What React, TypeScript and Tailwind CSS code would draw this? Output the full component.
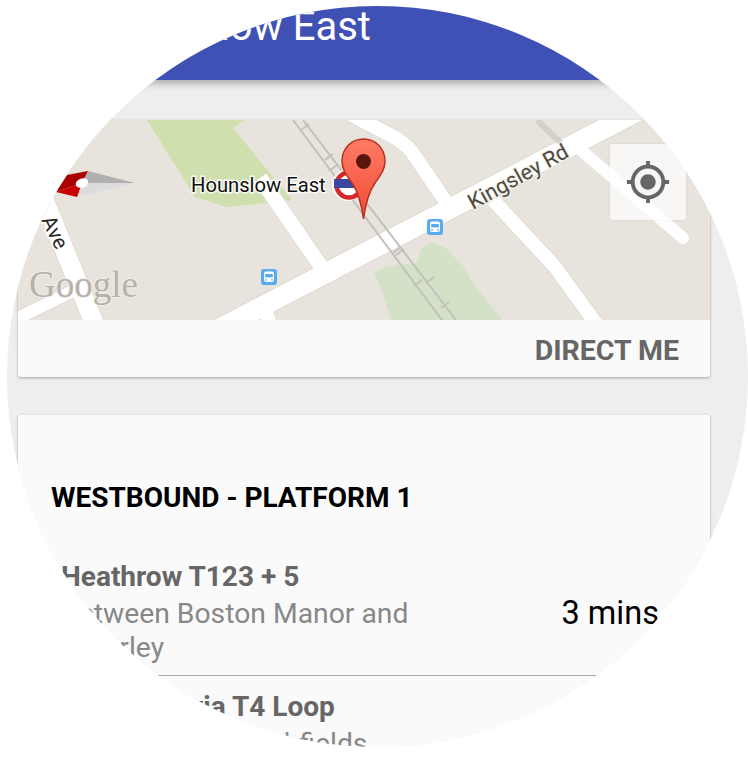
import { MdMyLocation } from "react-icons/md"

const font = "font-['Roboto',sans-serif]"

function BusIcon({ x, y }: { x: number; y: number }) {
    return (
        <g transform={`translate(${x} ${y})`}>
            <rect x="0" y="0" width="16" height="16" rx="3" fill="#5aaaf0" />
            <rect x="3" y="2.5" width="10" height="10.5" rx="2" fill="#ffffff" />
            <rect x="4.2" y="5" width="7.6" height="3.4" fill="#5aaaf0" />
            <circle cx="5" cy="10.8" r="0.9" fill="#5aaaf0" />
            <circle cx="11" cy="10.8" r="0.9" fill="#5aaaf0" />
        </g>
    )
}

function StreetMap() {
    const roads = [
        { d: "M10 322 L75 290", w: 12 },
        { d: "M30 165 L97 330", w: 19 },
        { d: "M260 178 L322 268", w: 15 },
        { d: "M262 300 L272 330", w: 14 },
        { d: "M348 113 L390 135 Q404 142 412 152 L448 205", w: 14 },
        { d: "M493 200 L555 267 L597 325", w: 14 },
        { d: "M200 339 L282 296 L640 110", w: 20 },
    ]
    const ties = [
        [305, 127], [329, 157], [333, 168], [397, 250], [400, 252], [418, 283], [430, 280], [445, 305],
    ]

    return (
        <svg viewBox="18 120 692 200" className="block w-full h-[200px]">
            <defs>
                <linearGradient id="pinFill" x1="0" y1="0" x2="0" y2="1">
                    <stop offset="0" stopColor="#ff7c66" />
                    <stop offset="1" stopColor="#f04a34" />
                </linearGradient>
            </defs>
            <rect x="18" y="120" width="692" height="200" fill="#e8e4dd" />

            {/* parks */}
            <polygon points="147,120 245,120 233,128 292,200 227,207 195,197" fill="#cfdfad" />
            <path d="M374 273 L384 267 L417 263 L421 248 L432 243 L446 248 L464 267 L471 280 L502 320 L391 320 L382 290 Z" fill="#d3e2c6" />

            {/* roads */}
            {roads.map((r) => (
                <path key={r.d} d={r.d} fill="none" stroke="#dcd8cd" strokeWidth={r.w + 1.5} strokeLinejoin="round" />
            ))}
            {roads.map((r) => (
                <path key={r.d + "w"} d={r.d} fill="none" stroke="#ffffff" strokeWidth={r.w} strokeLinejoin="round" />
            ))}
            <path d="M575 145 L683 238" fill="none" stroke="#ffffff" strokeWidth="12" strokeLinecap="round" />
            <path d="M537 120 L561 143" fill="none" stroke="#d2d2c6" strokeWidth="6" />

            {/* rail */}
            <path d="M293 120 L442 320 M303 120 L456 320" fill="none" stroke="#c2c1bc" strokeWidth="2" />
            {ties.map(([x, y]) => (
                <path key={x} d={`M${x - 4} ${y + 3} L${x + 4} ${y - 3}`} stroke="#c2c1bc" strokeWidth="2" />
            ))}

            <BusIcon x={261} y={269} />
            <BusIcon x={427} y={219} />

            {/* compass */}
            <polygon points="88,171 135,183 82,183" fill="#b0b0b0" />
            <polygon points="135,183 82,183 76,197" fill="#dcdcdc" />
            <polygon points="56,192 67,175 88,171 82,183" fill="#a80000" />
            <polygon points="56,192 82,183 77,197" fill="#c80000" />
            <ellipse cx="82" cy="183" rx="6.5" ry="4.5" fill="#ffffff" transform="rotate(-20 82 183)" />

            {/* labels */}
            <text
                x="191"
                y="192"
                fontFamily="Roboto, sans-serif"
                fontSize="20.2"
                fill="#111111"
                stroke="#ffffff"
                strokeOpacity="0.85"
                strokeWidth="3"
                paintOrder="stroke"
            >
                Hounslow East
            </text>
            <text
                transform="translate(41 220) rotate(64)"
                fontFamily="Roboto, sans-serif"
                fontSize="21"
                fill="#2b2926"
                stroke="#ffffff"
                strokeWidth="3"
                paintOrder="stroke"
            >
                Ave
            </text>
            <text
                transform="translate(473 210) rotate(-29)"
                fontFamily="Roboto, sans-serif"
                fontSize="21.5"
                fill="#4d4a40"
                stroke="#f4f2ec"
                strokeWidth="2.5"
                paintOrder="stroke"
            >
                Kingsley Rd
            </text>
            <text
                x="29"
                y="297"
                fontFamily="Liberation Serif, serif"
                fontSize="37"
                fill="#b4b2aa"
                stroke="#f2f0ea"
                strokeWidth="1.5"
                paintOrder="stroke"
            >
                Google
            </text>

            {/* underground roundel */}
            <circle cx="348" cy="185" r="16" fill="#ffffff" fillOpacity="0.8" />
            <circle cx="349" cy="185" r="12.5" fill="#ffffff" stroke="#d7262c" strokeWidth="4.5" />
            <rect x="334" y="179" width="30" height="9" fill="#3b48a0" />

            {/* pin */}
            <path
                d="M363.5 139 C351 139 342 149 342 161 C342 170 347 176 352 183 C357 190 361 200 363.5 219 C366 200 370 190 375 183 C380 176 385 170 385 161 C385 149 376 139 363.5 139 Z"
                fill="url(#pinFill)"
                stroke="#b8301f"
                strokeWidth="1.5"
            />
            <circle cx="363.5" cy="161.5" r="7.5" fill="#5a160e" />
        </svg>
    )
}

export default function App() {
    return (
        <div className={`min-h-screen bg-white pt-[6px] pl-[7px] ${font}`}>
            <div className="w-[741px] h-[741px] rounded-full overflow-hidden bg-[#eeeeee] flex flex-col">
                {/* Header */}
                <div className="relative z-10 h-[74px] shrink-0 bg-[#3f51b5] shadow-[0_3px_8px_rgba(0,0,0,0.3)] pl-[97px]">
                    <h1 className="text-[40px] leading-[41px] text-white whitespace-nowrap">Hounslow East</h1>
                </div>

                <div className="flex-1 pl-[11px] pr-[38px] pt-[40px] min-h-0">
                    {/* Map card */}
                    <div className="relative rounded-[3px] overflow-hidden bg-[#fafafa] shadow-[0_1px_3px_rgba(0,0,0,0.3)]">
                        <StreetMap />
                        <div className="absolute left-[592px] top-[24px] w-[76px] h-[76px] rounded-[3px] bg-white/70 shadow-[0_0_2px_rgba(0,0,0,0.12)] flex items-center justify-center text-[#666666]">
                            <MdMyLocation size={46} />
                        </div>
                        <div className="h-[57px] pt-[6px] pr-[31px] flex items-center justify-end">
                            <span className="text-[28.5px] font-bold text-[#666666]">DIRECT ME</span>
                        </div>
                    </div>

                    {/* Departures card */}
                    <div className="mt-[38px] rounded-[3px] bg-[#fafafa] shadow-[0_1px_3px_rgba(0,0,0,0.3)] pt-[63px] pb-[80px] pl-[33px] pr-[51px]">
                        <h2 className="text-[28px] leading-[40px] font-bold text-black">WESTBOUND - PLATFORM 1</h2>
                        <div className="mt-[41px] ml-[10px]">
                            <div className="flex items-center justify-between pb-[10px]">
                                <div className="w-[360px]">
                                    <div className="text-[28px] leading-[36px] font-bold text-[#666666]">Heathrow T123 + 5</div>
                                    <div className="mt-[2px] text-[28.3px] leading-[34px] text-[#888888]">Between Boston Manor and Osterley</div>
                                </div>
                                <span className="mt-[2px] text-[32.5px] text-black">3 mins</span>
                            </div>
                            <div className="border-t border-[#aaaaaa] pt-[13px]">
                                <div className="text-[28px] leading-[36px] font-bold text-[#666666]">Heathrow via T4 Loop</div>
                                <div className="mt-[2px] text-[28.3px] leading-[34px] text-[#888888]">Approaching Northfields</div>
                            </div>
                        </div>
                    </div>
                </div>
            </div>
        </div>
    )
}
